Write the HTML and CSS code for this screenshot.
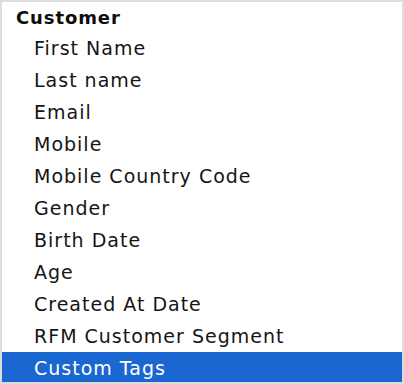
FILE: index.html
```html
<!DOCTYPE html>
<html>
<head>
<meta charset="utf-8">
<link rel="stylesheet" href="styles.css">
</head>
<body>
<div class="list">
  <div class="group">Customer</div>
  <div class="item">First Name</div>
  <div class="item">Last name</div>
  <div class="item">Email</div>
  <div class="item">Mobile</div>
  <div class="item">Mobile Country Code</div>
  <div class="item">Gender</div>
  <div class="item">Birth Date</div>
  <div class="item">Age</div>
  <div class="item">Created At Date</div>
  <div class="item">RFM Customer Segment</div>
  <div class="item selected">Custom Tags</div>
</div>
</body>
</html>
```
FILE: styles.css
```css
html, body {
  margin: 0;
  padding: 0;
  background: #ffffff;
}
.list {
  width: 404px;
  height: 384px;
  box-sizing: border-box;
  border: 2px solid #dcdcdc;
  overflow: hidden;
  font-family: "DejaVu Sans", sans-serif;
  font-size: 19px;
  letter-spacing: 1px;
  color: #151515;
}
.group {
  height: 30px;
  display: flex;
  align-items: center;
  padding-left: 14px;
  font-weight: 700;
  font-size: 18px;
  letter-spacing: 0.9px;
  color: #0d0d0d;
}
.item {
  height: 32px;
  display: flex;
  align-items: center;
  padding-left: 32px;
}
.item.selected {
  background: #1a67d2;
  color: #ffffff;
}
```
